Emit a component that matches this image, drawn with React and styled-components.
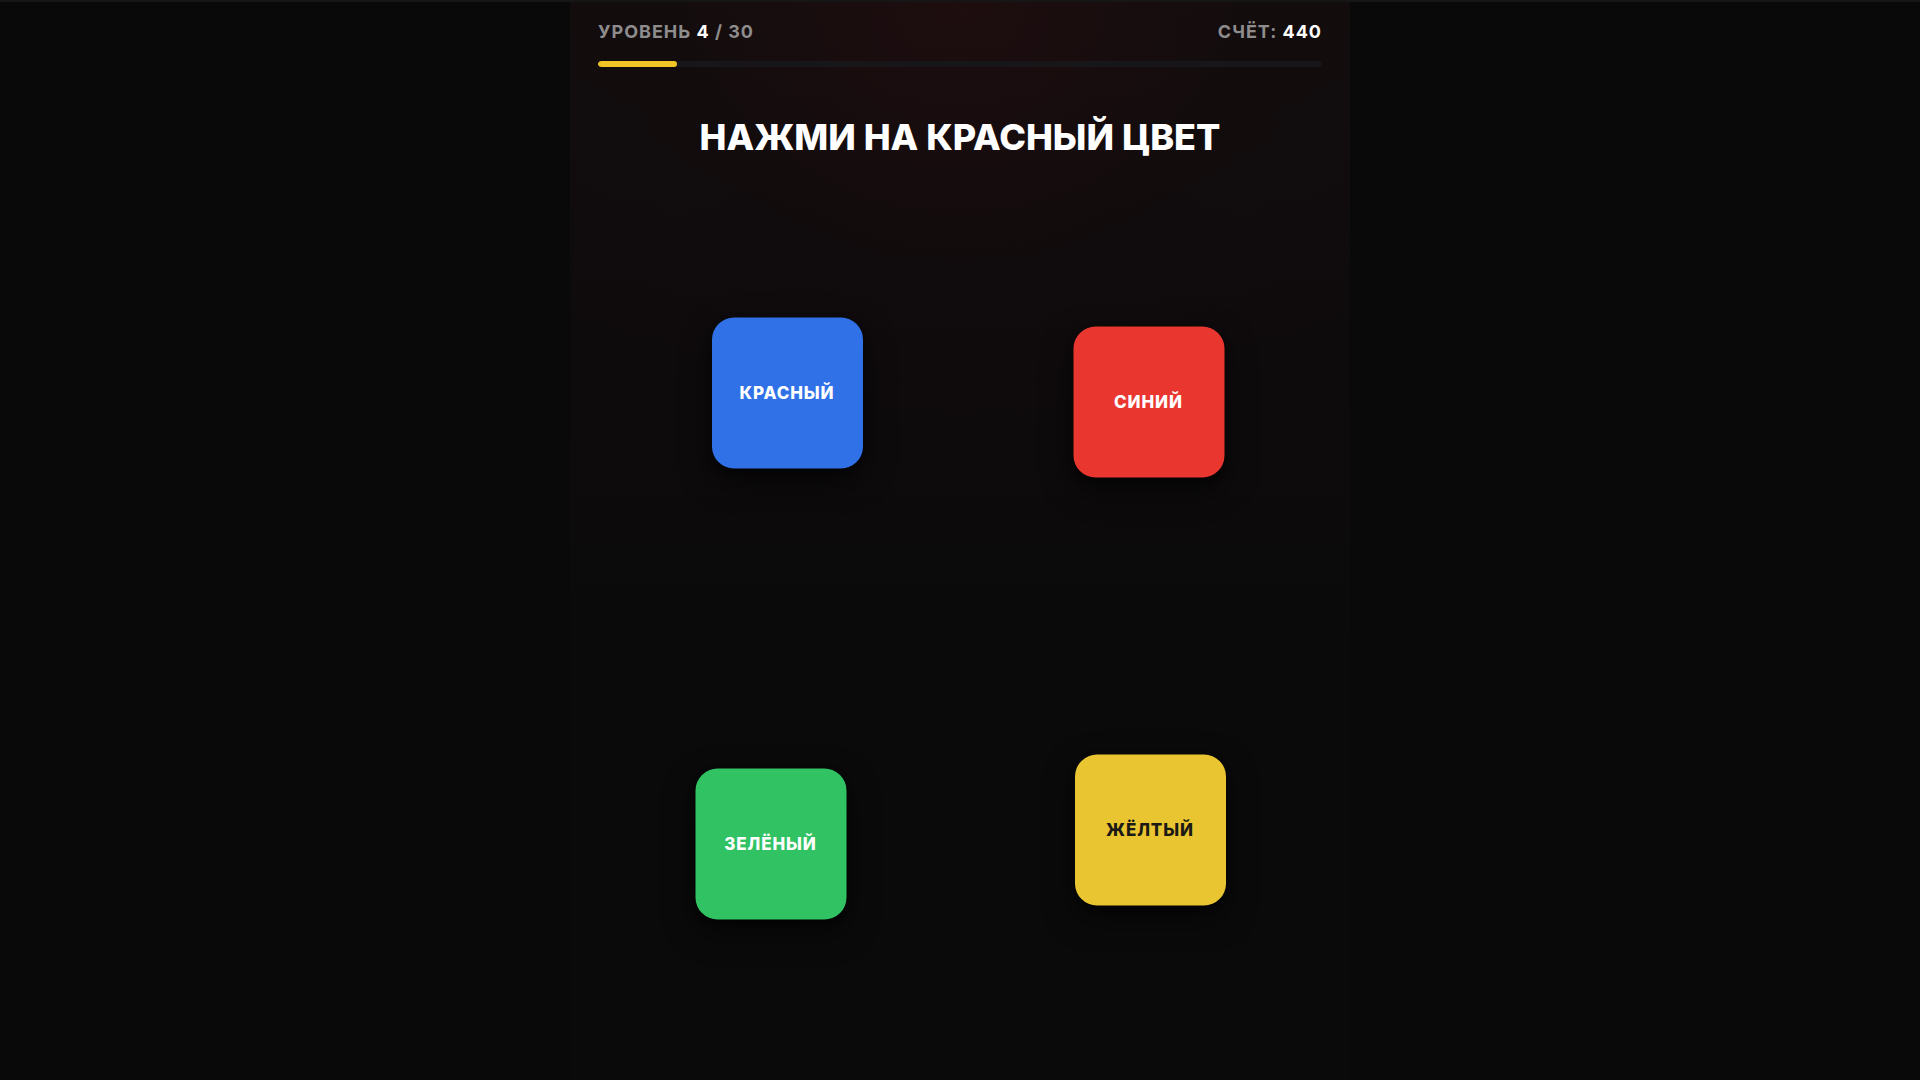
import React from "react";
import styled, { createGlobalStyle } from "styled-components";

const Global = createGlobalStyle`
  html, body {
    margin: 0;
    padding: 0;
    background: #090909;
  }
  body {
    font-family: Inter, "Noto Sans", "Liberation Sans", sans-serif;
    color: #fff;
    -webkit-font-smoothing: antialiased;
  }
  * { box-sizing: border-box; }
`;

const Page = styled.div`
  min-height: 1080px;
  height: 1080px;
  overflow: hidden;
  border-top: 2px solid #161616;
  display: flex;
  justify-content: center;
  background: #090909;
`;

const Column = styled.main`
  width: 780px;
  padding: 19px 28px 0;
  display: flex;
  flex-direction: column;
  background:
    radial-gradient(ellipse 70% 45% at 50% 0%, rgba(40, 14, 16, 0.55) 0%, rgba(20, 10, 11, 0.25) 55%, rgba(0, 0, 0, 0) 100%),
    linear-gradient(180deg, #120d0e 0%, #0e0b0c 35%, #0a0a0a 65%, #0a0a0a 100%);
`;

const Header = styled.header`
  display: flex;
  justify-content: space-between;
  align-items: center;
  font-size: 18px;
  font-weight: 700;
  letter-spacing: 1px;
  color: #8e8c8d;
  line-height: 22px;
`;

const Strong = styled.span`
  color: #ffffff;
`;

const Track = styled.div`
  margin-top: 18px;
  height: 6px;
  border-radius: 3px;
  background: #17171a;
  overflow: hidden;
`;

const Fill = styled.div`
  height: 100%;
  border-radius: 3px;
  background: #f2c526;
`;

const Title = styled.h1`
  margin: 48px 0 0;
  text-align: center;
  font-size: 36px;
  font-weight: 800;
  line-height: 44px;
  letter-spacing: 0;
  color: #ffffff;
`;

const Field = styled.div`
  margin-top: 18px;
  display: grid;
  grid-template-columns: 1fr 1fr;
  grid-template-rows: 440px 440px;
`;

const Cell = styled.div`
  display: flex;
  align-items: center;
  justify-content: center;
`;

const Tile = styled.button`
  width: 151px;
  height: 151px;
  border: none;
  border-radius: 22px;
  padding: 0;
  display: flex;
  align-items: center;
  justify-content: center;
  background: ${(p) => p.$bg};
  color: ${(p) => p.$fg};
  font-family: Inter, "Noto Sans", "Liberation Sans", sans-serif;
  font-size: 17px;
  font-weight: 800;
  letter-spacing: 0.9px;
  box-shadow: 0 12px 30px rgba(0, 0, 0, 0.55), 0 2px 6px rgba(0, 0, 0, 0.4);
  cursor: pointer;
`;

const tiles = [
  { label: "КРАСНЫЙ", bg: "#3071e8", fg: "#ffffff", dx: 8, dy: -4.5 },
  { label: "СИНИЙ", bg: "#e9362f", fg: "#ffffff", dx: 7.5, dy: 4.5 },
  { label: "ЗЕЛЁНЫЙ", bg: "#30c263", fg: "#ffffff", dx: -8.5, dy: 6.5 },
  { label: "ЖЁЛТЫЙ", bg: "#e9c532", fg: "#1c1a14", dx: 9, dy: -7.5 },
];

export default function App() {
  const level = 4;
  const total = 30;
  return (
    <>
      <Global />
      <Page>
        <Column>
          <Header>
            <span>
              УРОВЕНЬ <Strong>{level}</Strong> / {total}
            </span>
            <span>
              СЧЁТ: <Strong>440</Strong>
            </span>
          </Header>
          <Track>
            <Fill style={{ width: "10.9%" }} />
          </Track>
          <Title>НАЖМИ НА КРАСНЫЙ ЦВЕТ</Title>
          <Field>
            {tiles.map((t) => (
              <Cell key={t.label}>
                <Tile
                  $bg={t.bg}
                  $fg={t.fg}
                  style={{ transform: `translate(${t.dx}px, ${t.dy}px)` }}
                >
                  {t.label}
                </Tile>
              </Cell>
            ))}
          </Field>
        </Column>
      </Page>
    </>
  );
}
